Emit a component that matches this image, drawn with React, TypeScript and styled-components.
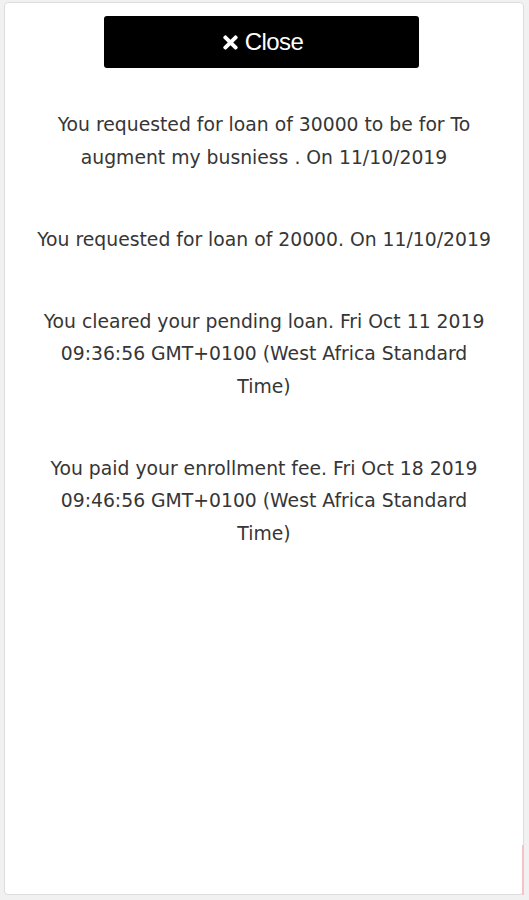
import React from 'react';
import styled, { createGlobalStyle } from 'styled-components';
import { FaTimes } from 'react-icons/fa';

const GlobalStyle = createGlobalStyle`
  html, body {
    margin: 0;
    padding: 0;
    background: #f1f1f1;
  }
  * {
    box-sizing: border-box;
  }
`;

const activities = [
  'You requested for loan of 30000 to be for To augment my busniess . On 11/10/2019',
  'You requested for loan of 20000. On 11/10/2019',
  'You cleared your pending loan. Fri Oct 11 2019 09:36:56 GMT+0100 (West Africa Standard Time)',
  'You paid your enrollment fee. Fri Oct 18 2019 09:46:56 GMT+0100 (West Africa Standard Time)',
];

const App = () => {
  return (
    <>
      <GlobalStyle />
      <Card>
        <CloseButton type="button">
          <FaTimes />
          <span>Close</span>
        </CloseButton>
        <List>
          {activities.map((text, i) => (
            <Item key={i}>{text}</Item>
          ))}
        </List>
      </Card>
    </>
  );
};

export default App;

const Card = styled.div`
  position: relative;
  margin: 2px 5px 0 4px;
  height: 893px;
  background: #ffffff;
  border: 1px solid #dcdcdc;
  border-radius: 4px;
  padding: 13px 20px 0;
  display: flex;
  flex-direction: column;
  align-items: center;
  /* pinkish scuff on the lower right edge */
  &::after {
    content: '';
    position: absolute;
    right: -1px;
    bottom: -1px;
    width: 2px;
    height: 50px;
    background: #f2c4c9;
  }
`;

const CloseButton = styled.button`
  width: 315px;
  height: 52px;
  margin-right: 5px;
  background: #000000;
  color: #ffffff;
  border: none;
  border-radius: 3px;
  display: flex;
  align-items: center;
  justify-content: center;
  gap: 4px;
  font-family: 'Liberation Sans', Arial, sans-serif;
  font-size: 24px;
  letter-spacing: -0.6px;
  cursor: pointer;
  svg {
    font-size: 21px;
    margin-top: 1px;
  }
`;

const List = styled.div`
  margin-top: 41px;
  width: 460px;
  display: flex;
  flex-direction: column;
  gap: 49.5px;
`;

const Item = styled.p`
  margin: 0;
  text-align: center;
  font-family: 'DejaVu Sans', 'Open Sans', sans-serif;
  font-size: 18.8px;
  line-height: 32.5px;
  color: #363636;
`;
